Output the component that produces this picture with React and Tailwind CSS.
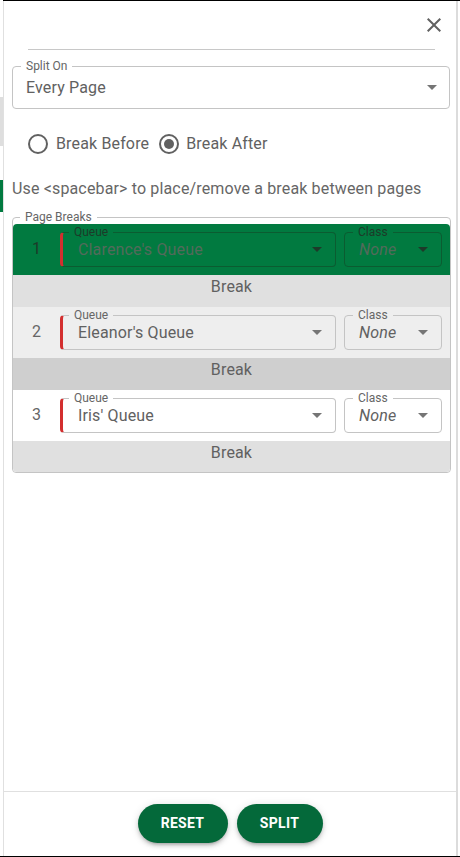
import React from "react";

function Arrow({ color = "#757575" }) {
  return (
    <svg width="10" height="5" viewBox="0 0 10 5" className="shrink-0">
      <path d="M0 0l5 5 5-5z" fill={color} />
    </svg>
  );
}

function Radio({ checked }) {
  return (
    <div className="w-[20px] h-[20px] rounded-full border-2 border-[#616161] flex items-center justify-center shrink-0">
      {checked ? <div className="w-[10px] h-[10px] rounded-full bg-[#616161]" /> : null}
    </div>
  );
}

const rows = [
  { n: 1, q: "Clarence's Queue", bg: "bg-[#017a40]", brk: "bg-[#e0e0e0]", sel: true, h: "h-[32px]" },
  { n: 2, q: "Eleanor's Queue", bg: "bg-[#eeeeee]", brk: "bg-[#cfcfcf]", sel: false, h: "h-[32px]" },
  { n: 3, q: "Iris' Queue", bg: "bg-white", brk: "bg-[#e0e0e0]", sel: false, h: "h-[31px]" },
];

function Row({ r }) {
  const sel = r.sel;
  const borderC = sel ? "border-[#0b5c31]" : "border-[#c4c4c4]";
  const labelC = sel ? "text-[#1d3a29]" : "text-[#666666]";
  const valC = sel ? "text-[#536a5b]" : "text-[#616161]";
  const numC = sel ? "text-[#1d3a29]" : "text-[#666666]";
  const arrowC = sel ? "#1d3a29" : "#757575";
  return (
    <>
      <div className={`h-[51px] flex items-start ${r.bg}`}>
        <div className={`w-[47px] h-[50px] flex items-center justify-center text-[16px] ${numC}`}>{r.n}</div>
        <fieldset className={`mt-[1px] w-[276px] h-[42px] border ${borderC} border-l-[3px] border-l-[#d32f2f] rounded-[4px] pl-[6px] pr-[13px] m-0 min-w-0`}>
          <legend className={`text-[12px] leading-[14px] px-[5px] ${labelC}`}>Queue</legend>
          <div className="h-[27px] pb-[6px] pl-[9px] flex items-center justify-between">
            <span className={`text-[16px] tracking-[0.15px] ${valC}`}>{r.q}</span>
            <Arrow color={arrowC} />
          </div>
        </fieldset>
        <fieldset className={`mt-[1px] ml-[8px] w-[98px] h-[42px] border ${borderC} rounded-[4px] pl-[8px] pr-[13px] m-0 min-w-0`}>
          <legend className={`text-[12px] leading-[14px] px-[5px] ${labelC}`}>Class</legend>
          <div className="h-[27px] pb-[6px] pl-[6px] flex items-center justify-between">
            <span className={`text-[16px] italic tracking-[0.15px] ${valC}`}>None</span>
            <Arrow color={arrowC} />
          </div>
        </fieldset>
      </div>
      <div className={`${r.h} ${r.brk} flex items-start justify-center pt-[2px] text-[16px] leading-[19px] tracking-[0.15px] text-[#616161]`}>Break</div>
    </>
  );
}

export default function App() {
  return (
    <div
      className="w-[460px] h-[857px] flex flex-col bg-white overflow-hidden"
      style={{ fontFamily: "Roboto, 'Liberation Sans', sans-serif" }}
    >
      <div className="flex flex-1 min-h-0">
        <div className="w-[3px] flex flex-col shrink-0">
          <div className="h-[97px]" />
          <div className="h-[49px] bg-[#dedede]" />
          <div className="h-[34px]" />
          <div className="h-[32px] bg-[#017a40]" />
        </div>
        <div className="flex-1 flex border-t border-black min-w-0">
          <div className="flex-1 flex flex-col border-l border-[#e0e0e0] border-r-2 border-r-[#dcdcdc] min-w-0">
            <div className="flex justify-end pt-[12px] pr-[10px]">
              <svg width="24" height="24" viewBox="0 0 24 24">
                <path
                  d="M19 6.41L17.59 5 12 10.59 6.41 5 5 6.41 10.59 12 5 17.59 6.41 19 12 13.41 17.59 19 19 17.59 13.41 12z"
                  fill="#616161"
                />
              </svg>
            </div>
            <div className="mt-[12px] ml-[24px] mr-[21px] h-px bg-[#c8c8c8]" />

            <fieldset className="mt-[10px] ml-[8px] mr-[6px] border border-[#c4c4c4] rounded-[4px] pl-[8px] pr-[12px] min-w-0">
              <legend className="text-[12px] leading-[12px] px-[5px] text-[#666666]">Split On</legend>
              <div className="h-[36px] pb-[5px] pl-[5px] flex items-center justify-between">
                <span className="text-[16px] tracking-[0.15px] text-[#616161]">Every Page</span>
                <Arrow />
              </div>
            </fieldset>

            <div className="mt-[25px] pl-[24px] flex items-center h-[20px]">
              <Radio />
              <span className="ml-[8px] text-[16px] tracking-[0.15px] text-[#616161]">Break Before</span>
              <div className="ml-[10px]">
                <Radio checked />
              </div>
              <span className="ml-[7px] text-[16px] tracking-[0.15px] text-[#616161]">Break After</span>
            </div>

            <div className="mt-[25px] pl-[8px] text-[16px] leading-[19px] tracking-[0.15px] text-[#666666]">
              Use &lt;spacebar&gt; to place/remove a break between pages
            </div>

            <fieldset className="mt-[12px] ml-[8px] mr-[5px] border border-[#c4c4c4] rounded-[4px] p-0 min-w-0 overflow-hidden">
              <legend className="ml-[7px] text-[12px] leading-[14px] px-[5px] text-[#666666]">Page Breaks</legend>
              {rows.map((r) => (
                <Row key={r.n} r={r} />
              ))}
            </fieldset>

            <div className="flex-1" />

            <div className="h-[65px] border-t border-[#e0e0e0] flex justify-center items-start pt-[12px] gap-[9px]">
              <button className="w-[90px] h-[39px] rounded-full bg-[#04693a] text-white text-[14px] font-bold tracking-[0.3px] shadow-[0_3px_3px_-2px_rgba(0,0,0,0.2),0_3px_4px_0_rgba(0,0,0,0.14),0_1px_8px_0_rgba(0,0,0,0.12)]">
                RESET
              </button>
              <button className="w-[86px] h-[39px] rounded-full bg-[#04693a] text-white text-[14px] font-bold tracking-[0.3px] shadow-[0_3px_3px_-2px_rgba(0,0,0,0.2),0_3px_4px_0_rgba(0,0,0,0.14),0_1px_8px_0_rgba(0,0,0,0.12)]">
                SPLIT
              </button>
            </div>
          </div>
          <div className="w-[2px] shrink-0" />
        </div>
      </div>
      <div className="h-px bg-black shrink-0" />
    </div>
  );
}
